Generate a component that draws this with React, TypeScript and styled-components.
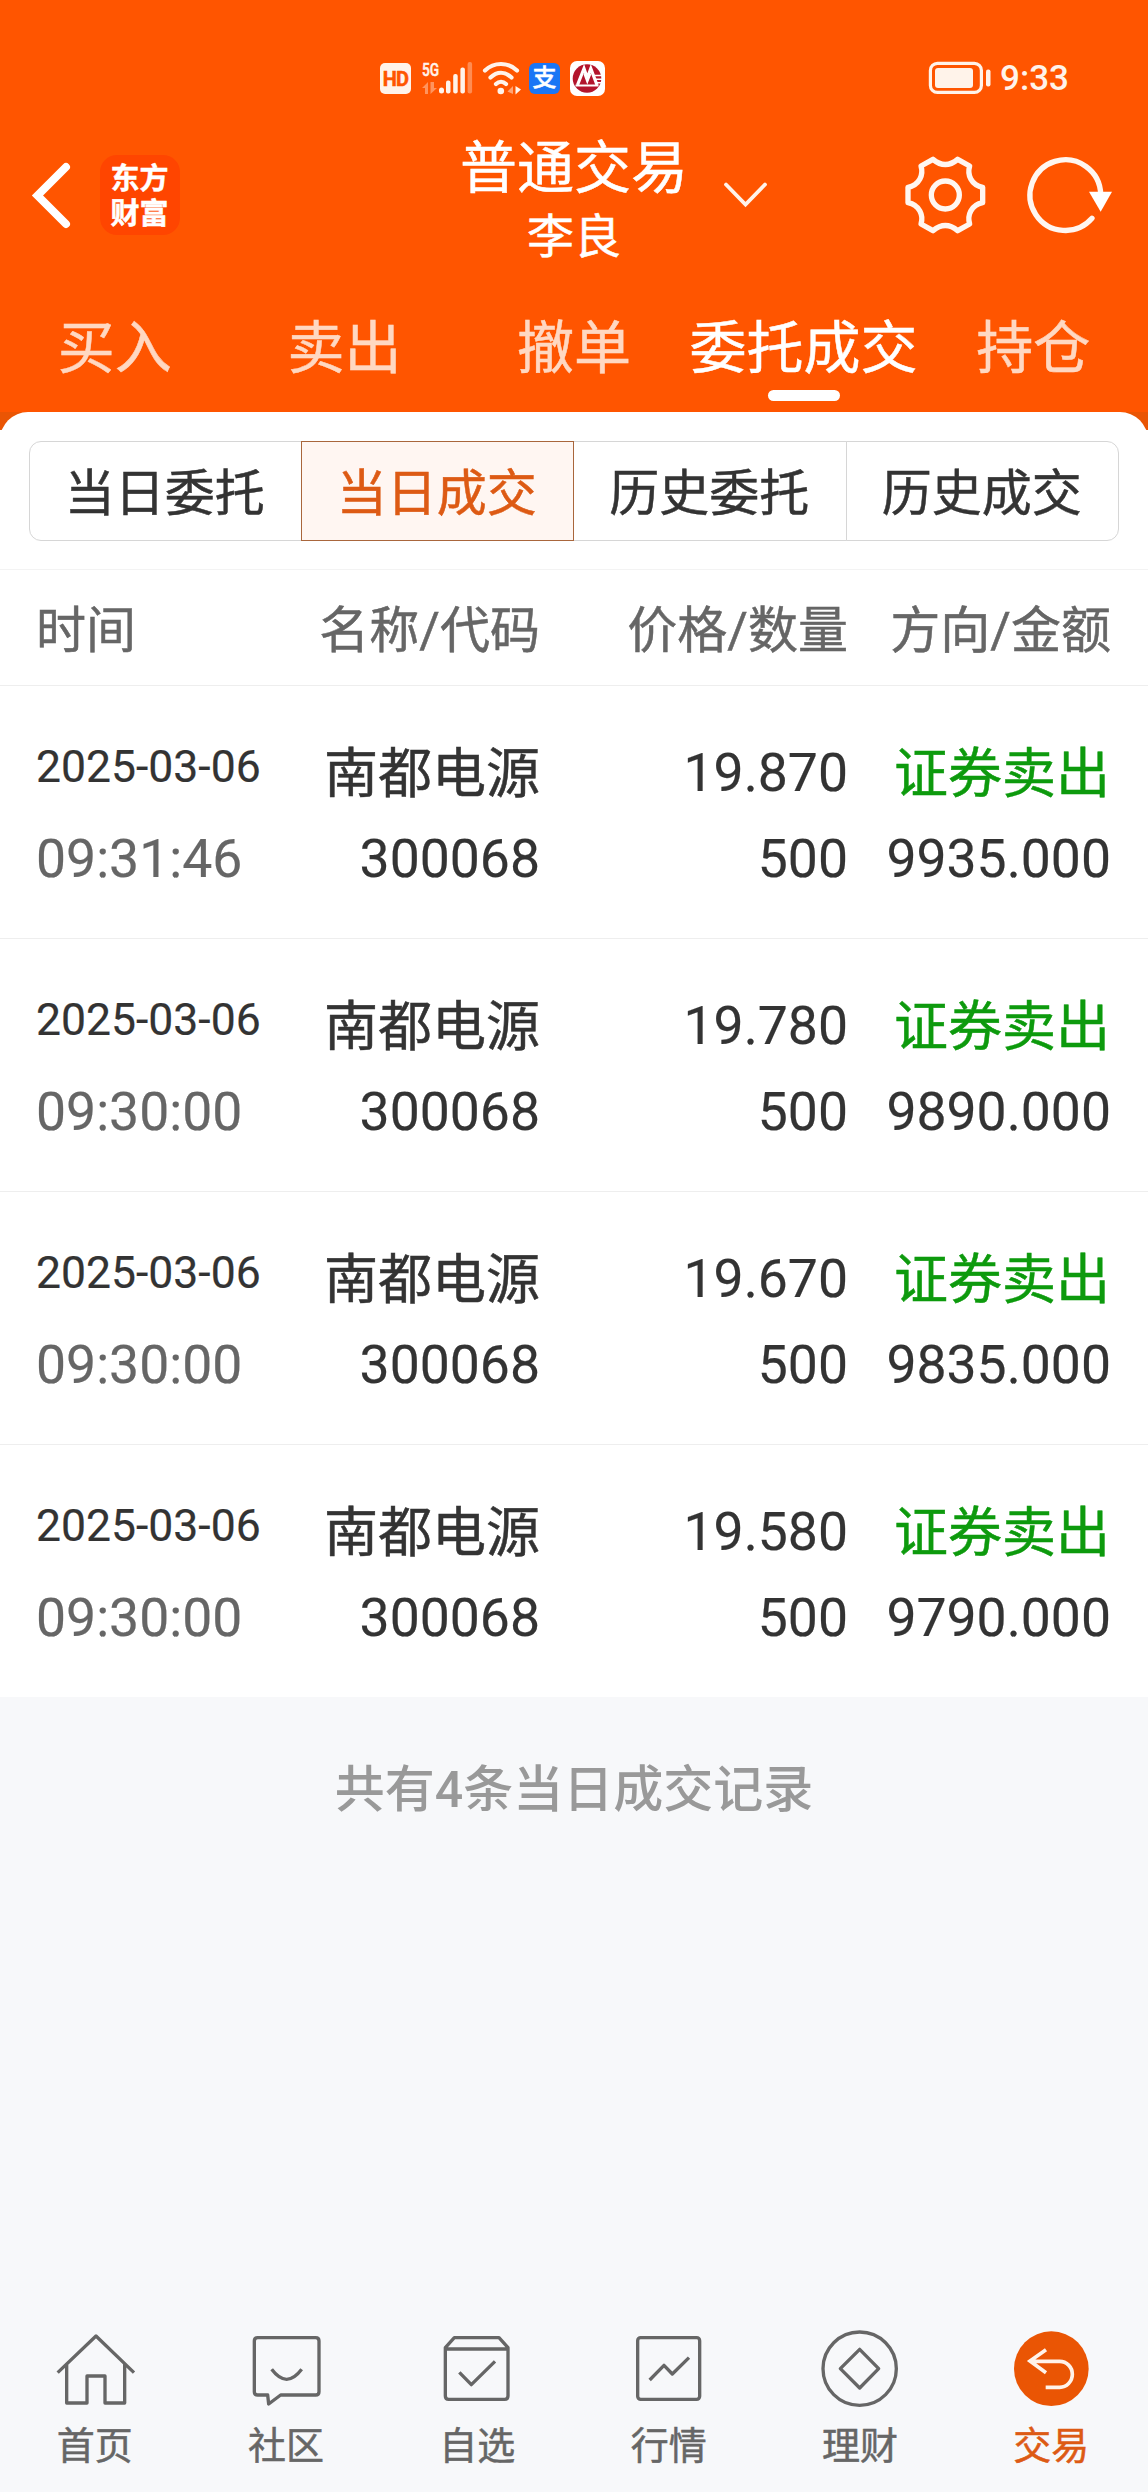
import React from "react";
import styled, { createGlobalStyle } from "styled-components";

const orange = "#ff5500";
const deepOrange = "#ea5504";
const ink = "#333333";
const grey = "#666666";
const line = "#eeeeee";

const GlobalStyle = createGlobalStyle`
  * { box-sizing: border-box; }
  html, body { margin: 0; padding: 0; background: #f7f8fa; }
  body {
    font-family: Roboto, "Noto Sans CJK SC", sans-serif;
    color: ${ink};
    -webkit-text-stroke: 0.5px currentColor;
  }
`;

const Screen = styled.div`
  display: flex;
  flex-direction: column;
  width: 1148px;
  height: 2492px;
  overflow: hidden;
  background: #f7f8fa;
`;

const Header = styled.header`
  display: flex;
  flex-direction: column;
  height: 412px;
  background: ${orange};
  color: #fff;
`;

const StatusBar = styled.div`
  display: flex;
  align-items: center;
  justify-content: space-between;
  height: 120px;
  padding: 36px 79px 0 380px;
`;

const StatusGroup = styled.div`
  display: flex;
  align-items: center;
`;

const HdBadge = styled.span`
  width: 31px;
  height: 31px;
  margin-right: 11px;
  border-radius: 5px;
  background: #fff3ea;
  color: ${orange};
  font-family: Roboto, sans-serif;
  font-size: 20px;
  font-weight: 700;
  line-height: 32px;
  text-align: center;
  letter-spacing: -0.8px;
`;

const Network = styled.span`
  display: flex;
  width: 51px;
  margin-right: 9px;
`;

const NetworkType = styled.span`
  display: flex;
  flex-direction: column;
  flex: none;
  width: 17px;
  height: 32px;
  color: #fff3ea;
  line-height: 16px;
`;

const Generation = styled.span`
  font-size: 19px;
  font-weight: 500;
  transform: scaleX(0.72);
  transform-origin: left;
`;

const PayBadge = styled.span`
  width: 31px;
  height: 31px;
  margin: 0 10px 0 8px;
  border-radius: 6px;
  background: #1a76f5;
  color: #fff;
  font-size: 24px;
  font-weight: 500;
  line-height: 31px;
  text-align: center;
`;

const Clock = styled.span`
  margin-left: 8px;
  padding-top: 2px;
  color: #fff3ea;
  font-size: 35px;
  font-weight: 500;
  line-height: 36px;
  -webkit-text-stroke: 0;
`;

const AppBar = styled.div`
  display: grid;
  grid-template-columns: 1fr auto 1fr;
  align-items: center;
  height: 150px;
`;

const AppBarStart = styled.div`
  display: flex;
  align-items: center;
  padding-left: 26px;
`;

const AppBarEnd = styled.div`
  display: flex;
  align-items: center;
  padding: 0 33px 0 34px;
`;

const Spacer = styled.span`
  flex: 1;
`;

const Gap = styled.span`
  flex: 0 0 36px;
`;

const BrandBadge = styled.div`
  width: 80px;
  height: 80px;
  margin-left: 22px;
  padding: 4px 1px 0 0;
  border-radius: 17px;
  background: #ff4500;
  font-family: "Noto Sans CJK SC", sans-serif;
  font-size: 29px;
  font-weight: 700;
  line-height: 35px;
  text-align: center;
`;

const TitleBlock = styled.div`
  margin-top: 12px;
  text-align: center;
`;

const Title = styled.div`
  padding-top: 1px;
  font-size: 57px;
  line-height: 60px;
`;

const Account = styled.div`
  margin-top: 11px;
  font-size: 47px;
  line-height: 54px;
`;

const MainTabs = styled.nav`
  display: grid;
  grid-template-columns: repeat(5, 1fr);
  padding-top: 49px;
`;

const MainTab = styled.div<{ $active?: boolean }>`
  display: flex;
  flex-direction: column;
  align-items: center;
  color: ${(p) => (p.$active ? "#fff" : "#ffd8c2")};
  font-size: 57px;
  line-height: 60px;
  white-space: nowrap;

  &::after {
    content: "";
    width: 72px;
    height: 11px;
    margin-top: 11px;
    border-radius: 6px;
    background: ${(p) => (p.$active ? "#fff" : "transparent")};
  }
`;

const PanelBackdrop = styled.div`
  background: linear-gradient(${deepOrange} 18px, #fff 18px);
`;

const Panel = styled.div`
  height: 158px;
  padding: 29px;
  border-bottom: 1px solid #f3f3f3;
  border-radius: 28px 28px 0 0;
  background: #fff;
`;

const Segments = styled.div`
  display: grid;
  grid-template-columns: repeat(4, 1fr);
  height: 100px;
`;

const Segment = styled.div<{ $active?: boolean }>`
  margin-left: -1px;
  padding: 3px 1px 0 0;
  height: 100px;
  border: 1px solid ${(p) => (p.$active ? "#a9663c" : "#d6d6d6")};
  background: ${(p) => (p.$active ? "#fff6f2" : "#fff")};
  color: ${(p) => (p.$active ? "#dd5a14" : ink)};
  font-size: 50px;
  line-height: 98px;
  text-align: center;
  z-index: ${(p) => (p.$active ? 1 : 0)};

  &:first-child {
    margin-left: 0;
    border-radius: 12px 0 0 12px;
  }
  &:last-child {
    border-radius: 0 12px 12px 0;
  }
`;

const columns = "36px 264px 240px 308px 263px";

const TableHead = styled.div`
  display: grid;
  grid-template-columns: ${columns};
  height: 116px;
  padding-top: 3px;
  border-bottom: 1px solid ${line};
  background: #fff;
  color: ${grey};
  font-size: 50px;
  line-height: 116px;
  white-space: nowrap;
`;

const HeadCell = styled.span<{ $start?: boolean }>`
  grid-column-start: ${(p) => (p.$start ? 2 : "auto")};
  text-align: ${(p) => (p.$start ? "left" : "right")};
`;

const Row = styled.div<{ $last: boolean }>`
  display: grid;
  grid-template-columns: ${columns};
  height: 253px;
  padding-top: 57px;
  border-bottom: 1px solid ${(p) => (p.$last ? "#f7f8fa" : line)};
  background: #fff;
`;

const Cell = styled.div<{ $start?: boolean }>`
  grid-column-start: ${(p) => (p.$start ? 2 : "auto")};
  display: flex;
  flex-direction: column;
  gap: 26px;
  text-align: ${(p) => (p.$start ? "left" : "right")};
  font-size: 53.5px;
  line-height: 60px;
  white-space: nowrap;
  -webkit-text-stroke: 0.2px currentColor;
`;

const DateText = styled.span`
  height: 60px;
  font-size: 44.5px;
  line-height: 48px;
`;

const TimeText = styled.span`
  color: ${grey};
`;

const NameText = styled.span`
  padding-top: 2px;
  margin-bottom: -2px;
  font-size: 54px;
  -webkit-text-stroke: 0.5px currentColor;
`;

const SideText = styled(NameText)`
  padding-right: 1px;
  color: #0d9a0d;
`;

const Summary = styled.p`
  flex: 1;
  margin: 0;
  padding-top: 62px;
  color: #999;
  font-size: 50px;
  font-weight: 500;
  line-height: 60px;
  text-align: center;
  -webkit-text-stroke: 0;
`;

const BottomNav = styled.nav`
  display: grid;
  grid-template-columns: repeat(6, 1fr);
  height: 165px;
`;

const NavItem = styled.div<{ $active?: boolean }>`
  display: flex;
  flex-direction: column;
  align-items: center;
  gap: 17px;
  color: ${(p) => (p.$active ? "#dd5a14" : grey)};
`;

const NavLabel = styled.span`
  padding-right: 2px;
  font-size: 38px;
  line-height: 44px;
`;

const NavIcon = styled.svg`
  width: 80px;
  height: 80px;
  fill: none;
  stroke: ${grey};
  stroke-width: 10;
  stroke-linejoin: round;
`;

const SignalIcon = () => (
  <svg width="34" height="32" viewBox="0 0 34 32" fill="#fff3ea">
    <rect x="0" y="25.500" width="5" height="6" rx="2.5" />
    <rect x="7" y="18.500" width="4.500" height="13" rx="2" />
    <rect x="14.200" y="12" width="4.500" height="19.500" rx="2" />
    <rect x="21.400" y="5.500" width="4.500" height="26" rx="2" />
    <rect x="28.600" y="0" width="4.500" height="31.500" rx="2" opacity="0.35" />
  </svg>
);

const DataArrows = () => (
  <svg width="16" height="12" viewBox="0 0 16 12" fill="#fff3ea" opacity="0.4">
    <path d="M0 6 6 0V12H3V6ZM8.500 0V12L15 6H12V0Z" />
  </svg>
);

const WifiIcon = () => (
  <svg width="39" height="34" viewBox="0 0 39 34" fill="none" stroke="#fff3ea" strokeWidth="4.200" strokeLinecap="round">
    <path d="M3 9.500C12 .8 26 .8 35 9.500M8.500 16.500C15 10.300 23 10.300 29.500 16.500M14 23C17 20.200 21 20.200 24 23" />
    <circle cx="18.800" cy="30" r="3.300" fill="#fff3ea" stroke="none" />
    <path d="M25.500 30.500 31 25V33Z" fill="#fff3ea" stroke="none" opacity="0.5" />
    <path d="M33.500 25V33.500L39 28.500Z" fill="#fff3ea" stroke="none" />
  </svg>
);

const BankIcon = () => (
  <svg width="35" height="35" viewBox="0 0 35 35">
    <rect width="35" height="35" rx="7" fill="#fff" />
    <circle cx="17" cy="17.500" r="14.300" fill="#b3142c" />
    <path d="M24 14.500H32M25 18.200H32M26.500 21.800H32" stroke="#fff" strokeWidth="1.400" />
    <path d="M7.500 24 14 7.500 17.300 17 20.800 7.500 27 24" fill="none" stroke="#fff" strokeWidth="3.200" />
    <path d="M14.300 13 17.300 21 20.500 13" fill="none" stroke="#fff" strokeWidth="1.800" />
    <path d="M5.500 24.500H28.500" stroke="#fff" strokeWidth="2" />
  </svg>
);

const BatteryIcon = () => (
  <svg width="64" height="34" viewBox="0 0 64 34" fill="#fff3ea">
    <rect x="2.400" y="2.400" width="51" height="29" rx="7" fill="none" stroke="#fff3ea" strokeWidth="3.200" />
    <rect x="7" y="7" width="38" height="20" rx="3" />
    <rect x="58" y="8.500" width="4.500" height="17" rx="2" />
  </svg>
);

const BackIcon = () => (
  <svg width="52" height="80" viewBox="0 0 52 80" fill="none" stroke="#fff" strokeWidth="8" strokeLinecap="round" strokeLinejoin="miter">
    <path d="M40 12 11.500 40.500 40 69" />
  </svg>
);

const ChevronIcon = () => (
  <svg width="48" height="28" viewBox="0 0 48 28" fill="none" stroke="#fff3ea" strokeWidth="3.800" strokeLinecap="round">
    <path d="M4 3.500 23.500 23.500 43 3.500" />
  </svg>
);

const GearIcon = () => (
  <svg width="84" height="84" viewBox="370 68 252 252" fill="none" stroke="#fff6f0" strokeWidth="16" strokeLinejoin="round">
    <path d="M460 87Q497 118 534 87L570 107C562 133 574 164 609 171V217C574 224 562 255 570 281L534 301Q497 270 460 301L424 281C432 255 420 224 385 217V171C420 164 432 133 424 107Z" />
    <circle cx="497" cy="194" r="42" />
  </svg>
);

const RefreshIcon = () => (
  <svg width="92" height="84" viewBox="729 68 276 252" fill="none" stroke="#fff6f0" strokeWidth="16">
    <path d="M962 192A106 106 0 1 0 936 264" strokeLinecap="round" />
    <path d="M927 184H996L962 244Z" fill="#fff" stroke="none" />
  </svg>
);

const HomeIcon = () => (
  <NavIcon viewBox="168 50 240 240">
    <path d="M173 187 288 77 402 187M200 162V278H261V197H315V278H374V162" />
  </NavIcon>
);

const CommunityIcon = () => (
  <NavIcon viewBox="741 50 240 240">
    <path d="M773 82H947Q957 82 957 92V244Q957 254 947 254H842L806 281L803 254H773Q763 254 763 244V92Q763 82 773 82Z" />
    <path d="M815 177Q860 237 905 177" />
  </NavIcon>
);

const WatchlistIcon = () => (
  <NavIcon viewBox="115 50 240 240">
    <path d="M137 112 164 82H298L325 112V257Q325 267 315 267H147Q137 267 137 257ZM137 116H325M179 186 215 223 286 153" />
  </NavIcon>
);

const MarketIcon = () => (
  <NavIcon viewBox="689 50 240 240">
    <rect x="712" y="82" width="186" height="185" rx="9" />
    <path d="M748 209 791 165 816 191 866 142" />
  </NavIcon>
);

const WealthIcon = () => (
  <NavIcon viewBox="123 50 240 240">
    <circle cx="239" cy="175" r="110" />
    <path d="M239 117 296 175 239 233 181 175Z" />
  </NavIcon>
);

const TradeIcon = () => (
  <NavIcon viewBox="697 50 240 240">
    <circle cx="815" cy="175" r="112" fill={deepOrange} stroke="none" />
    <path d="M799 118 751 152 799 187M753 153H840A38 39 0 0 1 840 231H798" stroke="#fff3ea" strokeWidth="11" strokeLinejoin="miter" />
  </NavIcon>
);

const mainTabs = ["买入", "卖出", "撤单", "委托成交", "持仓"];
const segments = ["当日委托", "当日成交", "历史委托", "历史成交"];

const trades = [
  { date: "2025-03-06", time: "09:31:46", price: "19.870", amount: "9935.000" },
  { date: "2025-03-06", time: "09:30:00", price: "19.780", amount: "9890.000" },
  { date: "2025-03-06", time: "09:30:00", price: "19.670", amount: "9835.000" },
  { date: "2025-03-06", time: "09:30:00", price: "19.580", amount: "9790.000" },
];

const navItems = [
  { label: "首页", Icon: HomeIcon },
  { label: "社区", Icon: CommunityIcon },
  { label: "自选", Icon: WatchlistIcon },
  { label: "行情", Icon: MarketIcon },
  { label: "理财", Icon: WealthIcon },
  { label: "交易", Icon: TradeIcon, active: true },
];

export default function App() {
  return (
    <>
      <GlobalStyle />
      <Screen>
        <Header>
          <StatusBar>
            <StatusGroup>
              <HdBadge>HD</HdBadge>
              <Network>
                <NetworkType>
                  <Generation>5G</Generation>
                  <Spacer />
                  <DataArrows />
                </NetworkType>
                <SignalIcon />
              </Network>
              <WifiIcon />
              <PayBadge>支</PayBadge>
              <BankIcon />
            </StatusGroup>
            <StatusGroup>
              <BatteryIcon />
              <Clock>9:33</Clock>
            </StatusGroup>
          </StatusBar>
          <AppBar>
            <AppBarStart>
              <BackIcon />
              <BrandBadge>
                东方
                <br />
                财富
              </BrandBadge>
            </AppBarStart>
            <TitleBlock>
              <Title>普通交易</Title>
              <Account>李良</Account>
            </TitleBlock>
            <AppBarEnd>
              <ChevronIcon />
              <Spacer />
              <GearIcon />
              <Gap />
              <RefreshIcon />
            </AppBarEnd>
          </AppBar>
          <MainTabs>
            {mainTabs.map((label) => (
              <MainTab key={label} $active={label === "委托成交"}>
                {label}
              </MainTab>
            ))}
          </MainTabs>
        </Header>
        <PanelBackdrop>
          <Panel>
            <Segments>
              {segments.map((label) => (
                <Segment key={label} $active={label === "当日成交"}>
                  {label}
                </Segment>
              ))}
            </Segments>
          </Panel>
        </PanelBackdrop>
        <TableHead>
          <HeadCell $start>时间</HeadCell>
          <HeadCell>名称/代码</HeadCell>
          <HeadCell>价格/数量</HeadCell>
          <HeadCell>方向/金额</HeadCell>
        </TableHead>
        {trades.map((trade, index) => (
          <Row key={trade.amount} $last={index === trades.length - 1}>
            <Cell $start>
              <DateText>{trade.date}</DateText>
              <TimeText>{trade.time}</TimeText>
            </Cell>
            <Cell>
              <NameText>南都电源</NameText>
              <span>300068</span>
            </Cell>
            <Cell>
              <span>{trade.price}</span>
              <span>500</span>
            </Cell>
            <Cell>
              <SideText>证券卖出</SideText>
              <span>{trade.amount}</span>
            </Cell>
          </Row>
        ))}
        <Summary>共有4条当日成交记录</Summary>
        <BottomNav>
          {navItems.map(({ label, Icon, active }) => (
            <NavItem key={label} $active={active}>
              <Icon />
              <NavLabel>{label}</NavLabel>
            </NavItem>
          ))}
        </BottomNav>
      </Screen>
    </>
  );
}
